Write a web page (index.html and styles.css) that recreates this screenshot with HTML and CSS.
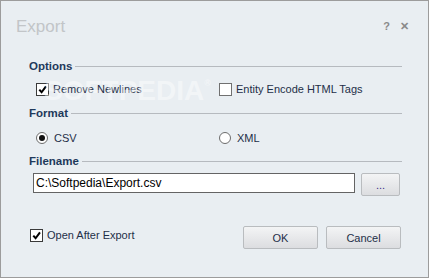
FILE: index.html
```html
<!DOCTYPE html>
<html>
<head>
    <meta charset="UTF-8">
    <title>Export</title>
    <link rel="stylesheet" href="styles.css">
</head>
<body>
<div class="dialog">
    <div class="titlebar">
        <span class="title">Export</span>
        <span class="tools"><span class="help">?</span><span class="close">&#x2715;</span></span>
    </div>
    <div class="content">
        <div class="group-head"><span>Options</span><i class="rule"></i></div>
        <div class="row cols">
            <label class="check"><span class="box"><svg viewBox="0 0 12 12"><path d="M2.5 6.2 L5 9 L9.8 2.6" /></svg></span>Remove Newlines</label>
            <label class="check"><span class="box empty"></span>Entity Encode HTML Tags</label>
        </div>
        <div class="group-head format"><span>Format</span><i class="rule"></i></div>
        <div class="row cols radios">
            <label class="radio"><span class="dot on"></span>CSV</label>
            <label class="radio"><span class="dot"></span>XML</label>
        </div>
        <div class="group-head filename"><span>Filename</span><i class="rule"></i></div>
        <div class="file-row">
            <div class="field">C:\Softpedia\Export.csv</div>
            <button class="btn browse">...</button>
        </div>
        <div class="footer">
            <label class="check open"><span class="box"><svg viewBox="0 0 12 12"><path d="M2.5 6.2 L5 9 L9.8 2.6" /></svg></span>Open After Export</label>
            <div class="actions">
                <button class="btn">OK</button>
                <button class="btn">Cancel</button>
            </div>
        </div>
    </div>
    <div class="watermark">SOFTPEDIA<sup>&reg;</sup></div>
</div>
</body>
</html>
```

FILE: styles.css
```css
body {
    margin: 0;
    font-family: "Liberation Sans", Arial, sans-serif;
    font-size: 11px;
    color: #1e2f48;
}
.dialog {
    position: relative;
    width: 429px;
    height: 278px;
    box-sizing: border-box;
    border: 1px solid #9c9c9c;
    background-color: #e9eef2;
    overflow: hidden;
}
.titlebar {
    display: flex;
    justify-content: space-between;
    align-items: center;
    height: 52px;
    padding: 0 19px 0 15px;
}
.title {
    font-size: 17px;
    color: #c2c5c8;
}
.tools {
    display: flex;
    gap: 10px;
    color: #8a8a8a;
    font-weight: bold;
    font-size: 11px;
    margin-top: -2px;
}
.content {
    padding: 6px 26px 0 28px;
}
.group-head {
    display: flex;
    align-items: center;
    height: 14px;
    font-weight: bold;
    font-size: 11.5px;
    color: #1e395b;
}
.group-head .rule {
    flex: 1;
    height: 1px;
    background-color: #b6babf;
    margin-left: 3px;
}
.row {
    display: flex;
    align-items: center;
    height: 14px;
    margin-top: 9px;
    padding-left: 7px;
}
.cols label {
    width: 185px;
}
.check, .radio {
    display: flex;
    align-items: center;
    gap: 4px;
}
.box {
    width: 11px;
    height: 11px;
    border: 1px solid #3a3a3a;
    background-color: #fff;
}
.box.empty {
    border-color: #707070;
}
.box svg {
    display: block;
    width: 11px;
    height: 11px;
    fill: none;
    stroke: #000;
    stroke-width: 2.2;
}
.format {
    margin-top: 10px;
}
.radios {
    margin-top: 11px;
}
.radio {
    gap: 6px;
}
.dot {
    position: relative;
    width: 10px;
    height: 10px;
    border: 1px solid #6c6c6c;
    border-radius: 50%;
    background-color: #fff;
}
.dot.on::after {
    content: "";
    position: absolute;
    left: 2px;
    top: 2px;
    width: 6px;
    height: 6px;
    border-radius: 50%;
    background-color: #111;
}
.filename {
    margin-top: 9px;
}
.file-row {
    display: flex;
    align-items: flex-start;
    margin-top: 5px;
    padding-left: 4px;
}
.field {
    width: 318px;
    height: 18px;
    line-height: 18px;
    border: 1px solid #646464;
    background-color: #fff;
    color: #000;
    font-size: 12px;
    padding-left: 2px;
}
.btn {
    font-family: "Liberation Sans", Arial, sans-serif;
    font-size: 11px;
    color: #1e2f48;
    border: 1px solid #b9bcbf;
    border-radius: 2px;
    background: linear-gradient(#f3f4f5, #dcdde0);
    padding: 0;
    width: 75px;
    height: 23px;
}
.browse {
    width: 39px;
    margin-left: 6px;
    color: #3b2f8a;
}
.footer {
    display: flex;
    justify-content: space-between;
    align-items: center;
    margin-top: 30px;
    padding-right: 1px;
}
.open {
    padding-left: 1px;
    margin-top: -5px;
}
.actions {
    display: flex;
    gap: 8px;
}
.watermark {
    position: absolute;
    left: 43px;
    top: 74px;
    font-size: 28px;
    font-weight: bold;
    color: rgba(255, 255, 255, 0.45);
    pointer-events: none;
}
.watermark sup {
    font-size: 9px;
    vertical-align: 14px;
}
```
